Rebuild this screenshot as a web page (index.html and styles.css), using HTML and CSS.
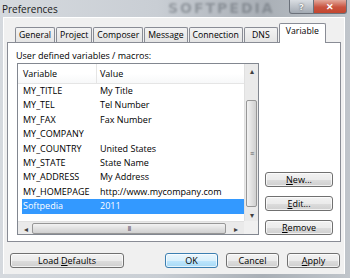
FILE: index.html
```html
<!DOCTYPE html>
<html lang="en">
<head>
  <meta charset="UTF-8">
  <title>Preferences</title>
  <link rel="stylesheet" href="styles.css">
</head>
<body>
  <div class="window">
    <div class="titlebar">
      <span class="title">Preferences</span>
      <span class="watermark">SOFTPEDIA</span>
      <div class="caption">
        <span class="cap-help">?</span>
        <span class="cap-close">&#x2715;</span>
      </div>
    </div>

    <div class="client">
      <div class="tabs">
        <span class="tab">General</span>
        <span class="tab">Project</span>
        <span class="tab">Composer</span>
        <span class="tab">Message</span>
        <span class="tab">Connection</span>
        <span class="tab">DNS</span>
        <span class="tab active">Variable</span>
      </div>

      <div class="panel">
        <div class="label">User defined variables / macros:</div>
        <div class="panel-body">
          <div class="listview">
            <div class="lv-main">
              <div class="lv-head">
                <span class="col1">Variable</span>
                <span class="col2">Value</span>
              </div>
              <div class="row"><span class="col1">MY_TITLE</span><span class="col2">My Title</span></div>
              <div class="row"><span class="col1">MY_TEL</span><span class="col2">Tel Number</span></div>
              <div class="row"><span class="col1">MY_FAX</span><span class="col2">Fax Number</span></div>
              <div class="row"><span class="col1">MY_COMPANY</span><span class="col2"></span></div>
              <div class="row"><span class="col1">MY_COUNTRY</span><span class="col2">United States</span></div>
              <div class="row"><span class="col1">MY_STATE</span><span class="col2">State Name</span></div>
              <div class="row"><span class="col1">MY_ADDRESS</span><span class="col2">My Address</span></div>
              <div class="row"><span class="col1">MY_HOMEPAGE</span><span class="col2">http://www.mycompany.com</span></div>
              <div class="row selected"><span class="col1">Softpedia</span><span class="col2">2011</span></div>
            </div>
            <div class="vscroll">
              <span class="arrow">&#x25B4;</span>
              <div class="vtrack"><div class="vthumb"><span class="grip">&#x2261;</span></div></div>
              <span class="arrow">&#x25BE;</span>
            </div>
            <div class="hscroll">
              <span class="arrow">&#x25C2;</span>
              <div class="hthumb"><span class="grip">III</span></div>
              <span class="arrow">&#x25B8;</span>
            </div>
            <div class="corner"></div>
          </div>

          <div class="side-btns">
            <button><u>N</u>ew...</button>
            <button><u>E</u>dit...</button>
            <button><u>R</u>emove</button>
          </div>
        </div>
      </div>

      <div class="footer">
        <button class="load">Load <u>D</u>efaults</button>
        <div class="footer-right">
          <button class="default">OK</button>
          <button>Cancel</button>
          <button><u>A</u>pply</button>
        </div>
      </div>
    </div>
  </div>
</body>
</html>
```

FILE: styles.css
```css
body {
  margin: 0;
  width: 350px;
  height: 278px;
  overflow: hidden;
  font-family: "Open Sans", "Noto Sans", sans-serif;
  font-size: 9px;
  color: #000;
  background: #c3c8ce;
}
.window {
  display: flex;
  flex-direction: column;
  height: 278px;
  background: linear-gradient(90deg, #d5d9de 0%, #c9ced4 45%, #a9afb6 75%, #c0c5cb 100%);
}
.titlebar {
  position: relative;
  height: 17px;
  flex: none;
  display: flex;
  align-items: center;
  overflow: hidden;
}
.title {
  margin-left: 2px;
  font-size: 10px;
  color: #1a1a1a;
}
.watermark {
  position: absolute;
  left: 168px;
  top: 1px;
  line-height: 15px;
  font-family: "DejaVu Sans", sans-serif;
  font-weight: bold;
  font-size: 14px;
  letter-spacing: 2px;
  color: #4d545c;
  opacity: 0.4;
  filter: blur(0.8px);
}
.caption {
  position: absolute;
  right: 3px;
  top: 0;
  display: flex;
}
.caption span {
  height: 13px;
  display: flex;
  align-items: center;
  justify-content: center;
  border: 1px solid #6b717a;
  border-top: none;
  color: #fff;
  font-size: 9px;
  font-weight: bold;
}
.cap-help {
  width: 23px;
  border-radius: 0 0 0 3px;
  background: linear-gradient(#d9dde2, #a3aab3);
  text-shadow: 0 0 2px #333;
}
.cap-close {
  width: 32px;
  border-left: none !important;
  border-radius: 0 0 3px 0;
  background: linear-gradient(#e3a99c, #c9533f 55%, #c3462f);
}

.client {
  flex: 1;
  margin: 0 5px 4px 3px;
  background: #f0f0f0;
  border: 1px solid #fff;
  border-bottom: none;
  display: flex;
  flex-direction: column;
  padding: 6px 3px 0 3px;
}
.tabs {
  display: flex;
  align-items: flex-end;
  padding-left: 8px;
  height: 19px;
  position: relative;
  z-index: 1;
  font-size: 8.7px;
}
.tab {
  min-width: 34px;
  height: 15px;
  box-sizing: border-box;
  padding: 0 3px;
  margin-right: 1px;
  display: flex;
  align-items: center;
  justify-content: center;
  border: 1px solid #898c95;
  border-bottom: none;
  border-radius: 2px 2px 0 0;
  background: linear-gradient(#f3f3f3, #e4e4e4);
  margin-bottom: 1px;
}
.tab.active {
  height: 20px;
  padding: 1px 6px 0 6px;
  margin-bottom: 0;
  background: #fff;
  align-items: flex-start;
}

.panel {
  margin-top: -1px;
  height: 200px;
  box-sizing: border-box;
  border: 1px solid #898c95;
  background: #fff;
  padding: 6px 7px 6px 9px;
  display: flex;
  flex-direction: column;
}
.label {
  height: 14px;
  line-height: 14px;
  margin-left: -1px;
}
.panel-body {
  display: flex;
  align-items: flex-end;
  gap: 6px;
  flex: 1;
}

.listview {
  width: 242px;
  height: 172px;
  box-sizing: border-box;
  border: 1px solid #828790;
  display: grid;
  grid-template-columns: 1fr 14px;
  grid-template-rows: 1fr 13px;
  background: #fff;
}
.lv-main {
  overflow: hidden;
}
.lv-head {
  display: flex;
  height: 19px;
  align-items: center;
  border-bottom: 1px solid #e5e5e5;
  background: linear-gradient(#fff 50%, #f7f8f9);
}
.lv-head .col1 {
  border-right: 1px solid #e5e5e5;
  height: 19px;
  line-height: 19px;
}
.col1 {
  width: 79px;
  box-sizing: border-box;
  padding-left: 5px;
  flex: none;
}
.col2 {
  padding-left: 3px;
  white-space: nowrap;
}
.row {
  display: flex;
  height: 14.4px;
  line-height: 14.4px;
  margin-left: 4px;
}
.row .col1 {
  width: 75px;
  padding-left: 1px;
}
.row.selected {
  background: #3399ff;
  color: #fff;
}

.vscroll {
  display: flex;
  flex-direction: column;
  background: #eaeaea;
  border-left: 1px solid #e0e0e0;
}
.arrow {
  height: 13px;
  flex: none;
  display: flex;
  align-items: center;
  justify-content: center;
  font-size: 8px;
  color: #404040;
}
.vtrack {
  flex: 1;
  padding-top: 23px;
  padding-bottom: 1px;
  display: flex;
  flex-direction: column;
}
.vthumb {
  flex: 1;
  margin: 0 1px;
  border: 1px solid #979797;
  border-radius: 2px;
  background: linear-gradient(90deg, #f3f3f3, #e1e1e1 50%, #d0d0d0);
  display: flex;
  align-items: center;
  justify-content: center;
}
.grip {
  font-size: 7px;
  color: #5a5a5a;
  letter-spacing: -1px;
}
.hscroll {
  display: flex;
  align-items: center;
  background: #eaeaea;
  border-top: 1px solid #e0e0e0;
  padding: 0 2px;
}
.hscroll .arrow {
  width: 12px;
}
.hthumb {
  flex: 1;
  height: 11px;
  margin-right: 4px;
  box-sizing: border-box;
  border: 1px solid #979797;
  border-radius: 2px;
  background: linear-gradient(#f3f3f3, #e1e1e1 50%, #d0d0d0);
  display: flex;
  align-items: center;
  justify-content: center;
}
.corner {
  background: #f0f0f0;
}

button {
  font-family: inherit;
  font-size: 9px;
  color: #000;
  height: 15px;
  padding: 0;
  border: 1px solid #707070;
  border-radius: 3px;
  background: linear-gradient(#f2f2f2 0%, #ebebeb 50%, #dddddd 51%, #cfcfcf 100%);
  box-shadow: inset 0 0 0 1px rgba(255,255,255,0.7);
}
button.default {
  border-color: #3c7fb1;
  background: linear-gradient(#eaf6fd 0%, #d9f0fc 50%, #bee6fd 51%, #a7d9f5 100%);
}
.side-btns {
  display: flex;
  flex-direction: column;
  gap: 9px;
}
.side-btns button {
  width: 68px;
}
.footer {
  display: flex;
  justify-content: space-between;
  margin-top: 11px;
  padding: 0 1px 0 3px;
}
.footer .load {
  width: 114px;
}
.footer-right {
  display: flex;
  gap: 8px;
}
.footer-right button {
  width: 53px;
}
```
